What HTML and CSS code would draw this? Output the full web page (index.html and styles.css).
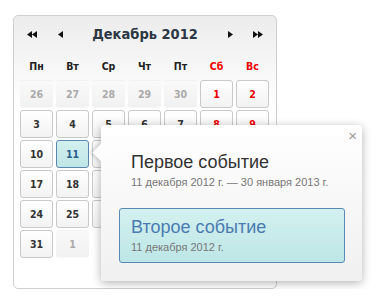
FILE: index.html
```html
<!DOCTYPE html>
<html lang="ru">
<head>
    <meta charset="UTF-8">
    <title>Календарь</title>
    <link rel="stylesheet" href="styles.css">
</head>
<body>
    <div class="calendar">
        <div class="cal-head">
            <span class="nav">
                <svg width="10" height="7" viewBox="0 0 10 7"><path d="M5 0V7L0 3.5Z M10 0V7L5 3.5Z" fill="#111"/></svg>
            </span>
            <span class="nav">
                <svg width="5" height="7" viewBox="0 0 5 7"><path d="M5 0V7L0 3.5Z" fill="#111"/></svg>
            </span>
            <span class="title">Декабрь 2012</span>
            <span class="nav">
                <svg width="5" height="7" viewBox="0 0 5 7"><path d="M0 0V7L5 3.5Z" fill="#111"/></svg>
            </span>
            <span class="nav">
                <svg width="10" height="7" viewBox="0 0 10 7"><path d="M0 0V7L5 3.5Z M5 0V7L10 3.5Z" fill="#111"/></svg>
            </span>
        </div>
        <div class="grid weekdays">
            <span>Пн</span><span>Вт</span><span>Ср</span><span>Чт</span><span>Пт</span>
            <span class="red">Сб</span><span class="red">Вс</span>
        </div>
        <div class="grid days">
            <span class="day other">26</span>
            <span class="day other">27</span>
            <span class="day other">28</span>
            <span class="day other">29</span>
            <span class="day other">30</span>
            <span class="day red">1</span>
            <span class="day red">2</span>
            <span class="day">3</span>
            <span class="day">4</span>
            <span class="day">5</span>
            <span class="day">6</span>
            <span class="day">7</span>
            <span class="day red">8</span>
            <span class="day red">9</span>
            <span class="day">10</span>
            <span class="day selected">11</span>
            <span class="day">12</span>
            <span class="day">13</span>
            <span class="day">14</span>
            <span class="day red">15</span>
            <span class="day red">16</span>
            <span class="day">17</span>
            <span class="day">18</span>
            <span class="day">19</span>
            <span class="day">20</span>
            <span class="day">21</span>
            <span class="day red">22</span>
            <span class="day red">23</span>
            <span class="day">24</span>
            <span class="day">25</span>
            <span class="day">26</span>
            <span class="day">27</span>
            <span class="day">28</span>
            <span class="day red">29</span>
            <span class="day red">30</span>
            <span class="day">31</span>
            <span class="day other">1</span>
        </div>

        <div class="popover">
            <span class="close">×</span>
            <div class="event">
                <div class="event-title">Первое событие</div>
                <div class="event-date">11 декабря 2012 г. — 30 января 2013 г.</div>
            </div>
            <div class="event active">
                <div class="event-title">Второе событие</div>
                <div class="event-date">11 декабря 2012 г.</div>
            </div>
        </div>
    </div>
</body>
</html>
```

FILE: styles.css
```css
body {
    margin: 0;
    padding: 15px 0 0 13px;
    background: #fff;
    font-family: "DejaVu Sans Condensed", "DejaVu Sans", sans-serif;
    font-stretch: condensed;
}

.calendar {
    position: relative;
    width: 262px;
    height: 272px;
    border: 1px solid #cfcfcf;
    border-radius: 5px;
    background: linear-gradient(#ececec, #fff 90px);
}

.cal-head {
    display: flex;
    align-items: center;
    height: 34px;
    padding: 1px 0 0 4px;
}

.nav {
    display: flex;
    justify-content: center;
    width: 28px;
}

.title {
    flex: 0 0 142px;
    text-align: center;
    font-size: 14.5px;
    font-weight: bold;
    color: #2c3744;
}

.grid {
    display: grid;
    grid-template-columns: repeat(7, 33px);
    column-gap: 3px;
    padding-left: 6px;
}

.weekdays {
    height: 29px;
    align-items: center;
    font-size: 10.5px;
    font-weight: bold;
    color: #222;
    text-align: center;
}

.days {
    row-gap: 2px;
}

.day {
    box-sizing: border-box;
    height: 28px;
    line-height: 26px;
    text-align: center;
    font-size: 10.5px;
    font-weight: bold;
    color: #333;
    border: 1px solid #c9c9c9;
    border-radius: 3px;
    background: linear-gradient(#fff, #f2f2f2);
}

.red {
    color: #e00;
}

.day.other {
    color: #aaa;
    border-color: transparent;
    background: linear-gradient(#f9f9f9, #f1f1f1);
}

.day.selected {
    border-color: #5b87ad;
    background: linear-gradient(#d3efef, #bfe6e6);
    color: #2b5e8c;
}

/* popover */
.popover {
    position: absolute;
    left: 87px;
    top: 109px;
    width: 226px;
    padding: 18px 17px 18px 18px;
    background: linear-gradient(#fff, #f0f0f0);
    border-radius: 4px;
    box-shadow: 0 2px 10px rgba(0, 0, 0, 0.3);
    font-family: "Liberation Sans", Arial, sans-serif;
    font-stretch: normal;
}

.popover::before {
    content: "";
    position: absolute;
    left: -6px;
    top: 21px;
    width: 13px;
    height: 13px;
    background: #fdfdfd;
    transform: rotate(45deg);
    box-shadow: -2px 2px 3px rgba(0, 0, 0, 0.12);
}

.close {
    position: absolute;
    top: 2px;
    right: 5px;
    font-size: 15px;
    color: #999;
}

.event {
    position: relative;
    height: 40px;
    padding: 7px 11px 6px;
    border: 1px solid transparent;
    border-radius: 3px;
}

.event + .event {
    margin-top: 10px;
}

.event.active {
    border-color: #5a89b8;
    background: linear-gradient(#d4f0f0, #bde6e6);
}

.event-title {
    font-size: 18px;
    line-height: 23px;
    color: #333;
}

.event.active .event-title {
    color: #4a7bb0;
}

.event-date {
    margin-top: 2px;
    font-size: 11px;
    line-height: 13px;
    color: #777;
}
```
